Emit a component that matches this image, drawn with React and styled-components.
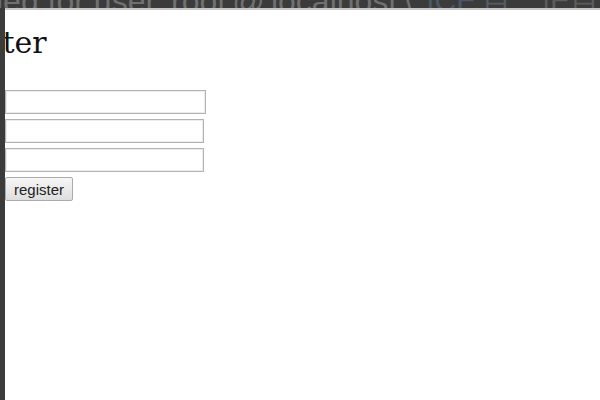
import React from 'react';
import styled, { createGlobalStyle } from 'styled-components';

const GlobalStyle = createGlobalStyle`
  html, body {
    margin: 0;
    padding: 0;
    background: #3b3b3b;
  }
`;

const Screen = styled.div`
  display: grid;
  grid-template-rows: 8px 1fr;
  width: 600px;
  height: 400px;
  overflow: hidden;
  background: #3b3b3b;
`;

const TopStrip = styled.div`
  display: flex;
  align-items: flex-start;
  overflow: hidden;
  white-space: nowrap;
`;

const ErrorText = styled.span`
  display: block;
  margin: -16px 0 0 -4px;
  font-family: 'Liberation Sans', Arial, sans-serif;
  font-size: 32px;
  line-height: 34px;
  color: #707070;
`;

const Tag = styled.span`
  display: block;
  margin: -16px 0 0 ${(p) => p.gap}px;
  font-family: 'Liberation Sans', Arial, sans-serif;
  font-size: 30px;
  line-height: 34px;
  color: ${(p) => p.color};
`;

const Body = styled.div`
  display: flex;
`;

const LeftStrip = styled.div`
  width: 5px;
  flex: none;
  background: #3b3b3b;
`;

const Panel = styled.div`
  flex: 1;
  background: #fff;
  border-top: 2px solid #c6c6c6;
  overflow: hidden;
`;

const Title = styled.h2`
  margin: 16px 0 0 -87px;
  font-family: 'DejaVu Serif', 'Liberation Serif', serif;
  font-size: 30px;
  font-weight: normal;
  line-height: 34px;
  color: #111;
  white-space: nowrap;
`;

const Form = styled.form`
  display: flex;
  flex-direction: column;
  align-items: flex-start;
  gap: 5px;
  margin-top: 30px;
`;

const Field = styled.input`
  box-sizing: border-box;
  width: ${(p) => p.w}px;
  height: 24px;
  margin: 0;
  padding: 2px 4px;
  border: 1px solid #b3b3b3;
  box-shadow: inset 0 0 0 1px #ececec;
  background: #fff;
  font-family: 'Liberation Sans', Arial, sans-serif;
  font-size: 13px;
  outline: none;
`;

const Button = styled.button`
  box-sizing: border-box;
  width: 68px;
  height: 24px;
  margin: 0;
  padding: 0 4px;
  border: 1px solid #acacac;
  border-radius: 2px;
  background: linear-gradient(#f6f6f6, #dedede);
  font-family: 'Liberation Sans', Arial, sans-serif;
  font-size: 15px;
  color: #222;
`;

export default function App() {
  return (
    <>
      <GlobalStyle />
      <Screen>
        <TopStrip>
          <ErrorText>ied for user 'root'@'localhost'\</ErrorText>
          <Tag gap={14} color="#4a5866">ICE</Tag>
          <Tag gap={6} color="#555d66">目</Tag>
          <Tag gap={30} color="#5c5c5c">|E目|</Tag>
        </TopStrip>
        <Body>
          <LeftStrip />
          <Panel>
            <Title>Register</Title>
            <Form onSubmit={(e) => e.preventDefault()}>
              <Field type="text" w={201} />
              <Field type="password" w={199} />
              <Field type="password" w={199} />
              <Button type="submit">register</Button>
            </Form>
          </Panel>
        </Body>
      </Screen>
    </>
  );
}
